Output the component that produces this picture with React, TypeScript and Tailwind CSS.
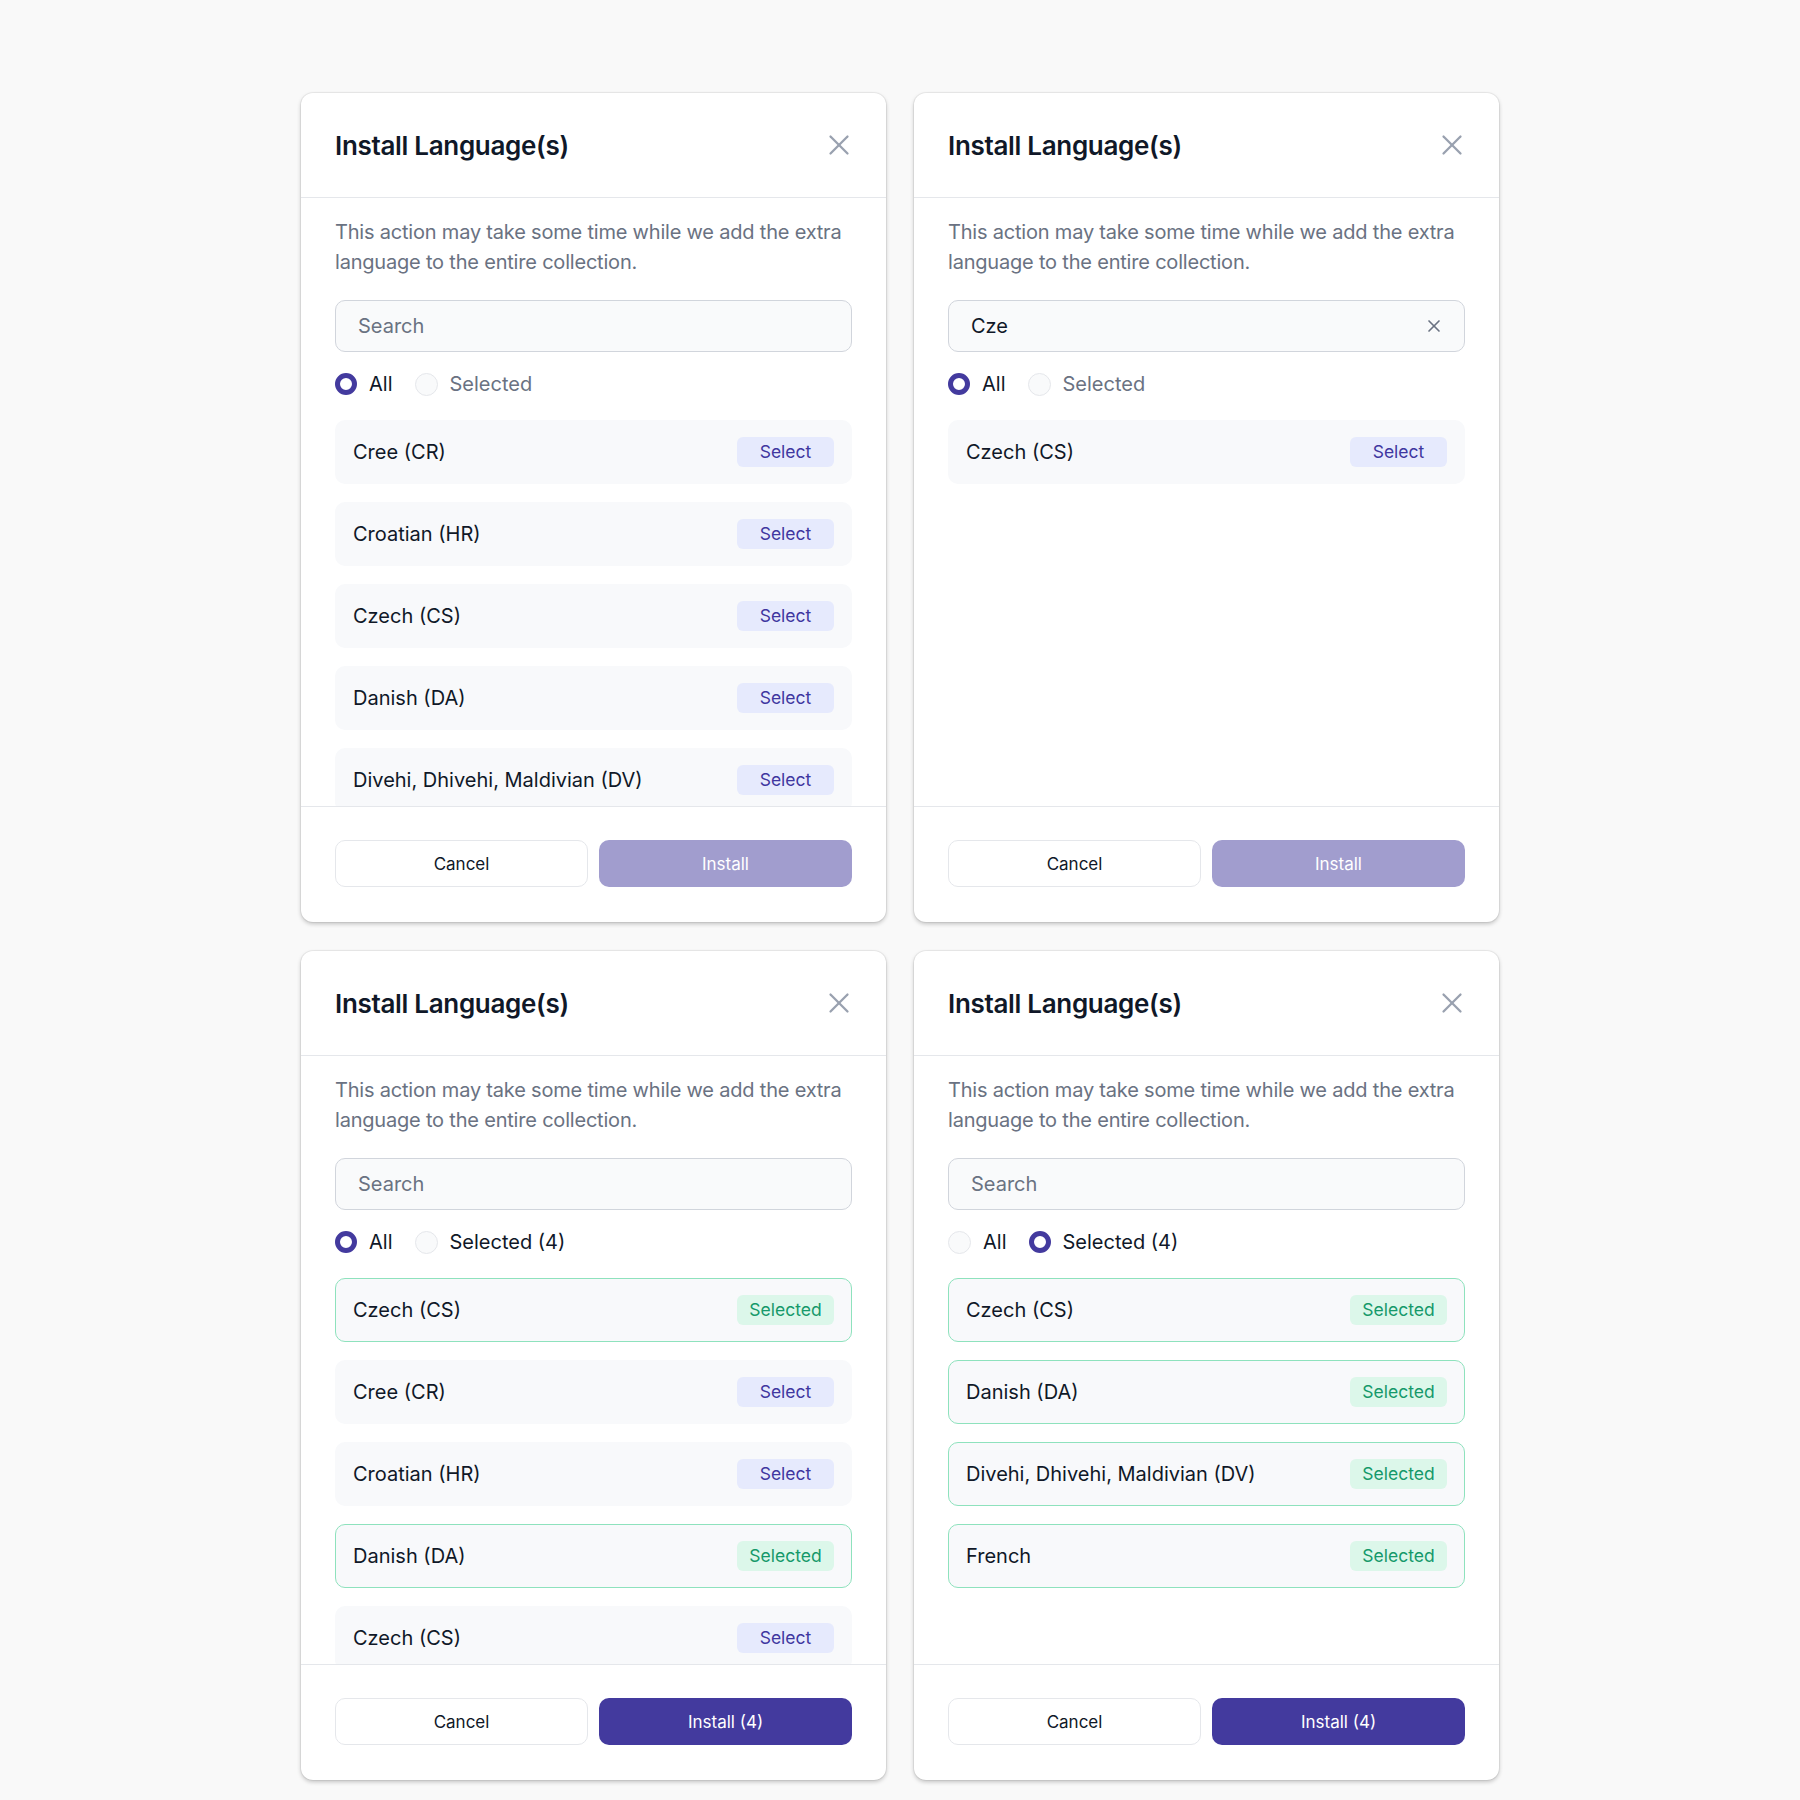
import { X } from "lucide-react";

type Lang = { name: string; selected?: boolean };

type Panel = {
    query: string;
    filter: "all" | "selected";
    count: number;
    items: Lang[];
};

const panels: Panel[] = [
    {
        query: "",
        filter: "all",
        count: 0,
        items: [
            { name: "Cree (CR)" },
            { name: "Croatian (HR)" },
            { name: "Czech (CS)" },
            { name: "Danish (DA)" },
            { name: "Divehi, Dhivehi, Maldivian (DV)" },
        ],
    },
    {
        query: "Cze",
        filter: "all",
        count: 0,
        items: [{ name: "Czech (CS)" }],
    },
    {
        query: "",
        filter: "all",
        count: 4,
        items: [
            { name: "Czech (CS)", selected: true },
            { name: "Cree (CR)" },
            { name: "Croatian (HR)" },
            { name: "Danish (DA)", selected: true },
            { name: "Czech (CS)" },
        ],
    },
    {
        query: "",
        filter: "selected",
        count: 4,
        items: [
            { name: "Czech (CS)", selected: true },
            { name: "Danish (DA)", selected: true },
            { name: "Divehi, Dhivehi, Maldivian (DV)", selected: true },
            { name: "French", selected: true },
        ],
    },
];

function Radio({ checked, label, muted }: { checked: boolean; label: string; muted?: boolean }) {
    return (
        <div className="flex items-center gap-3">
            {checked ? (
                <span className="w-[22px] h-[22px] rounded-full border-[5px] border-[#433a9e] bg-white" />
            ) : (
                <span className="w-[23px] h-[23px] rounded-full border border-gray-200 bg-gray-50" />
            )}
            <span className={`text-[20px] leading-[30px] ${muted ? "text-gray-500" : "text-gray-900"}`}>{label}</span>
        </div>
    );
}

function LanguageRow({ lang }: { lang: Lang }) {
    return (
        <div
            className={`shrink-0 h-16 flex items-center justify-between pl-[17px] pr-[17px] rounded-[10px] bg-[#f8f9fb] border-[1.5px] ${
                lang.selected ? "border-[#8ee2bd]" : "border-transparent"
            }`}
        >
            <span className="text-[20px] text-gray-900">{lang.name}</span>
            {lang.selected ? (
                <span className="w-[97px] h-[30px] flex items-center justify-center rounded-md bg-[#dcf7ea] text-[#15996a] text-[17.5px]">
                    Selected
                </span>
            ) : (
                <span className="w-[97px] h-[30px] flex items-center justify-center rounded-md bg-[#e6eafd] text-[#3f37a0] text-[17.5px]">
                    Select
                </span>
            )}
        </div>
    );
}

function InstallDialog({ panel }: { panel: Panel }) {
    const hasSelection = panel.count > 0;
    return (
        <div className="w-[585px] h-[829px] flex flex-col bg-white rounded-[12px] shadow-[0_2px_4px_rgba(0,0,0,0.22),0_0_0_1px_rgba(0,0,0,0.05)] overflow-hidden">
            {/* Header */}
            <div className="h-[105px] shrink-0 flex items-center justify-between pl-[34px] pr-[30px] border-b border-gray-200">
                <h2 className="text-[26px] font-semibold text-gray-900 tracking-[-0.012em]">Install Language(s)</h2>
                <X className="w-[34px] h-[34px] text-gray-400" strokeWidth={1.6} />
            </div>

            {/* Body */}
            <div className="flex-1 flex flex-col px-[34px] pt-[19px] overflow-hidden">
                <p className="text-[20px] leading-[30px] text-gray-500 tracking-[-0.01em]">
                    This action may take some time while we add the extra language to the entire collection.
                </p>

                <div className="mt-[23px] h-[52px] shrink-0 flex items-center justify-between pl-[22px] pr-[20px] rounded-[10px] bg-gray-50 border border-gray-300">
                    {panel.query ? (
                        <span className="text-[20px] text-gray-900">{panel.query}</span>
                    ) : (
                        <span className="text-[20px] text-gray-500">Search</span>
                    )}
                    {panel.query && <X className="w-[20px] h-[20px] text-gray-500" strokeWidth={2} />}
                </div>

                <div className="mt-[17px] h-[30px] shrink-0 flex items-center gap-[22px]">
                    <Radio checked={panel.filter === "all"} label="All" />
                    <Radio
                        checked={panel.filter === "selected"}
                        label={hasSelection ? `Selected (${panel.count})` : "Selected"}
                        muted={!hasSelection}
                    />
                </div>

                <div className="mt-[21px] flex flex-col gap-[18px]">
                    {panel.items.map((lang, i) => (
                        <LanguageRow key={i} lang={lang} />
                    ))}
                </div>
            </div>

            {/* Footer */}
            <div className="shrink-0 border-t border-gray-200 px-[34px] pt-[33px] pb-[35px] grid grid-cols-2 gap-[11px]">
                <button className="h-[47px] pt-[2px] rounded-[10px] border border-gray-200 bg-white text-[17px] text-gray-900">
                    Cancel
                </button>
                <button
                    className={`h-[47px] pt-[2px] rounded-[10px] text-[17px] text-white ${
                        hasSelection ? "bg-[#433a9e]" : "bg-[#a19dce]"
                    }`}
                >
                    {hasSelection ? `Install (${panel.count})` : "Install"}
                </button>
            </div>
        </div>
    );
}

export default function App() {
    return (
        <div
            className="min-h-screen w-full bg-[#f9f9f9] flex justify-center pt-[93px] pb-5"
            style={{ fontFamily: "Inter, 'Noto Sans', sans-serif" }}
        >
            <div className="grid grid-cols-2 gap-x-[28px] gap-y-[29px]">
                {panels.map((p, i) => (
                    <InstallDialog key={i} panel={p} />
                ))}
            </div>
        </div>
    );
}
